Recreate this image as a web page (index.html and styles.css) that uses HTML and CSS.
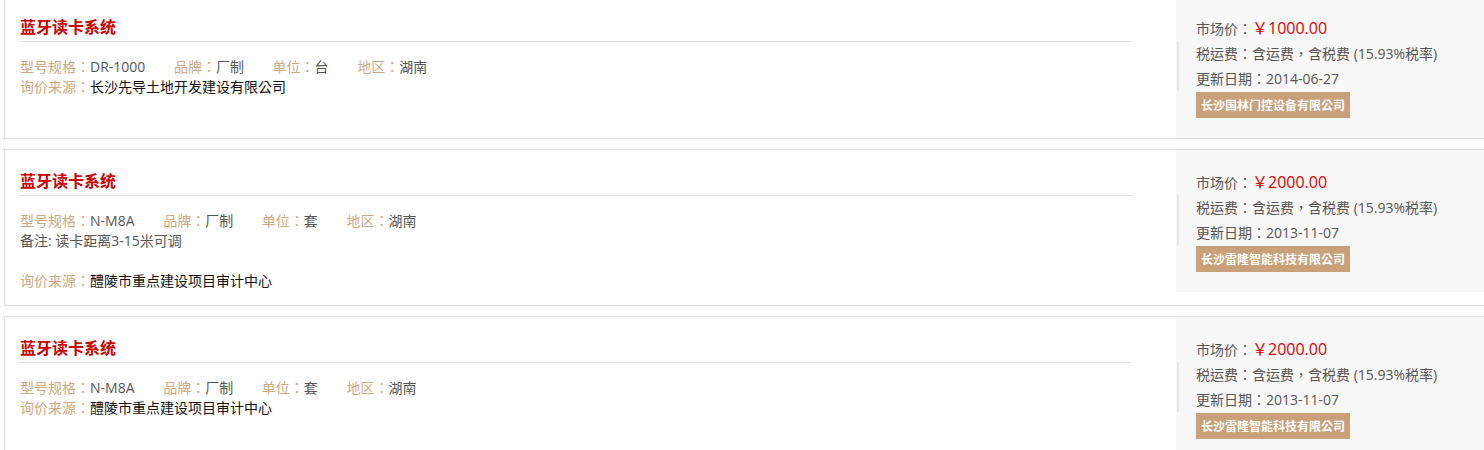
FILE: index.html
```html
<!DOCTYPE html>
<html lang="zh-CN">
<head>
<meta charset="utf-8">
<title>蓝牙读卡系统</title>
<link rel="stylesheet" href="styles.css">
</head>
<body>
<div class="page">
  <div class="list">
    <div class="card card-first">
      <div class="main">
        <h3 class="title">蓝牙读卡系统</h3>
        <div class="specs">
          <div class="row">
            <span class="item"><span class="lbl">型号规格：</span><span class="val">DR-1000</span></span>
            <span class="item"><span class="lbl">品牌：</span><span class="val">厂制</span></span>
            <span class="item"><span class="lbl">单位：</span><span class="val">台</span></span>
            <span class="item"><span class="lbl">地区：</span><span class="val">湖南</span></span>
          </div>
          <div class="row"><span class="lbl">询价来源：</span><span class="src">长沙先导土地开发建设有限公司</span></div>
        </div>
      </div>
      <div class="side">
        <div class="line">市场价：<span class="price">￥1000.00</span></div>
        <div class="meta">
          <div class="line">税运费：含运费，含税费 (15.93%税率)</div>
          <div class="line">更新日期：2014-06-27</div>
        </div>
        <span class="badge">长沙国林门控设备有限公司</span>
      </div>
    </div>

    <div class="card">
      <div class="main">
        <h3 class="title">蓝牙读卡系统</h3>
        <div class="specs">
          <div class="row">
            <span class="item"><span class="lbl">型号规格：</span><span class="val">N-M8A</span></span>
            <span class="item"><span class="lbl">品牌：</span><span class="val">厂制</span></span>
            <span class="item"><span class="lbl">单位：</span><span class="val">套</span></span>
            <span class="item"><span class="lbl">地区：</span><span class="val">湖南</span></span>
          </div>
          <div class="row note">备注: 读卡距离3-15米可调</div>
          <div class="row"><span class="lbl">询价来源：</span><span class="src">醴陵市重点建设项目审计中心</span></div>
        </div>
      </div>
      <div class="side">
        <div class="line">市场价：<span class="price">￥2000.00</span></div>
        <div class="meta">
          <div class="line">税运费：含运费，含税费 (15.93%税率)</div>
          <div class="line">更新日期：2013-11-07</div>
        </div>
        <span class="badge">长沙雷隆智能科技有限公司</span>
      </div>
    </div>

    <div class="card">
      <div class="main">
        <h3 class="title">蓝牙读卡系统</h3>
        <div class="specs">
          <div class="row">
            <span class="item"><span class="lbl">型号规格：</span><span class="val">N-M8A</span></span>
            <span class="item"><span class="lbl">品牌：</span><span class="val">厂制</span></span>
            <span class="item"><span class="lbl">单位：</span><span class="val">套</span></span>
            <span class="item"><span class="lbl">地区：</span><span class="val">湖南</span></span>
          </div>
          <div class="row"><span class="lbl">询价来源：</span><span class="src">醴陵市重点建设项目审计中心</span></div>
        </div>
      </div>
      <div class="side">
        <div class="line">市场价：<span class="price">￥2000.00</span></div>
        <div class="meta">
          <div class="line">税运费：含运费，含税费 (15.93%税率)</div>
          <div class="line">更新日期：2013-11-07</div>
        </div>
        <span class="badge">长沙雷隆智能科技有限公司</span>
      </div>
    </div>
  </div>
</div>
</body>
</html>
```

FILE: styles.css
```css
html, body {
  margin: 0;
  padding: 0;
  background: #fff;
  overflow: hidden;
}

body {
  font-family: "Open Sans", "Noto Sans CJK TC", sans-serif;
  font-feature-settings: "locl" 0;
  font-size: 14px;
  color: #555;
}

.page {
  width: 1484px;
  height: 450px;
  overflow: hidden;
}

.list {
  padding-left: 4px;
  margin-top: -5px;
  width: 1500px;
}

.card {
  display: flex;
  align-items: flex-start;
  border: 1px solid #dddddd;
  margin-bottom: 10px;
  width: 1490px;
  box-sizing: border-box;
}

.main {
  width: 1171px;
  box-sizing: border-box;
  padding: 18px 45px 14px 15px;
}

.title {
  margin: 0;
  font-family: "Noto Sans CJK TC", sans-serif;
  font-size: 16px;
  font-weight: bold;
  line-height: 24px;
  color: #cc0000;
  padding-bottom: 3px;
  border-bottom: 1px solid #dddddd;
}

.specs {
  margin-top: 15px;
}

.row {
  line-height: 20px;
  height: 20px;
  white-space: nowrap;
}

.item {
  margin-right: 25px;
}

.lbl {
  color: #cda882;
}

.val {
  color: #555;
}

.src {
  color: #111;
}

.note {
  color: #555;
  margin-bottom: 20px;
}

.side {
  flex: 1;
  background: #f7f7f7;
  padding: 20px 20px 20px 20px;
  box-sizing: border-box;
}

.line {
  line-height: 25px;
  height: 25px;
  white-space: nowrap;
  color: #555;
}

.price {
  color: #e00000;
  font-size: 16px;
}

.meta {
  margin-left: -19px;
  padding-left: 17px;
  border-left: 2px solid #e6e6e6;
}

.badge {
  display: inline-block;
  margin-top: 1px;
  background: #c8a07a;
  color: #fff;
  font-family: "Noto Sans CJK TC", sans-serif;
  font-size: 12px;
  font-weight: bold;
  line-height: 16px;
  padding: 5px 5px;
  white-space: nowrap;
}
```
